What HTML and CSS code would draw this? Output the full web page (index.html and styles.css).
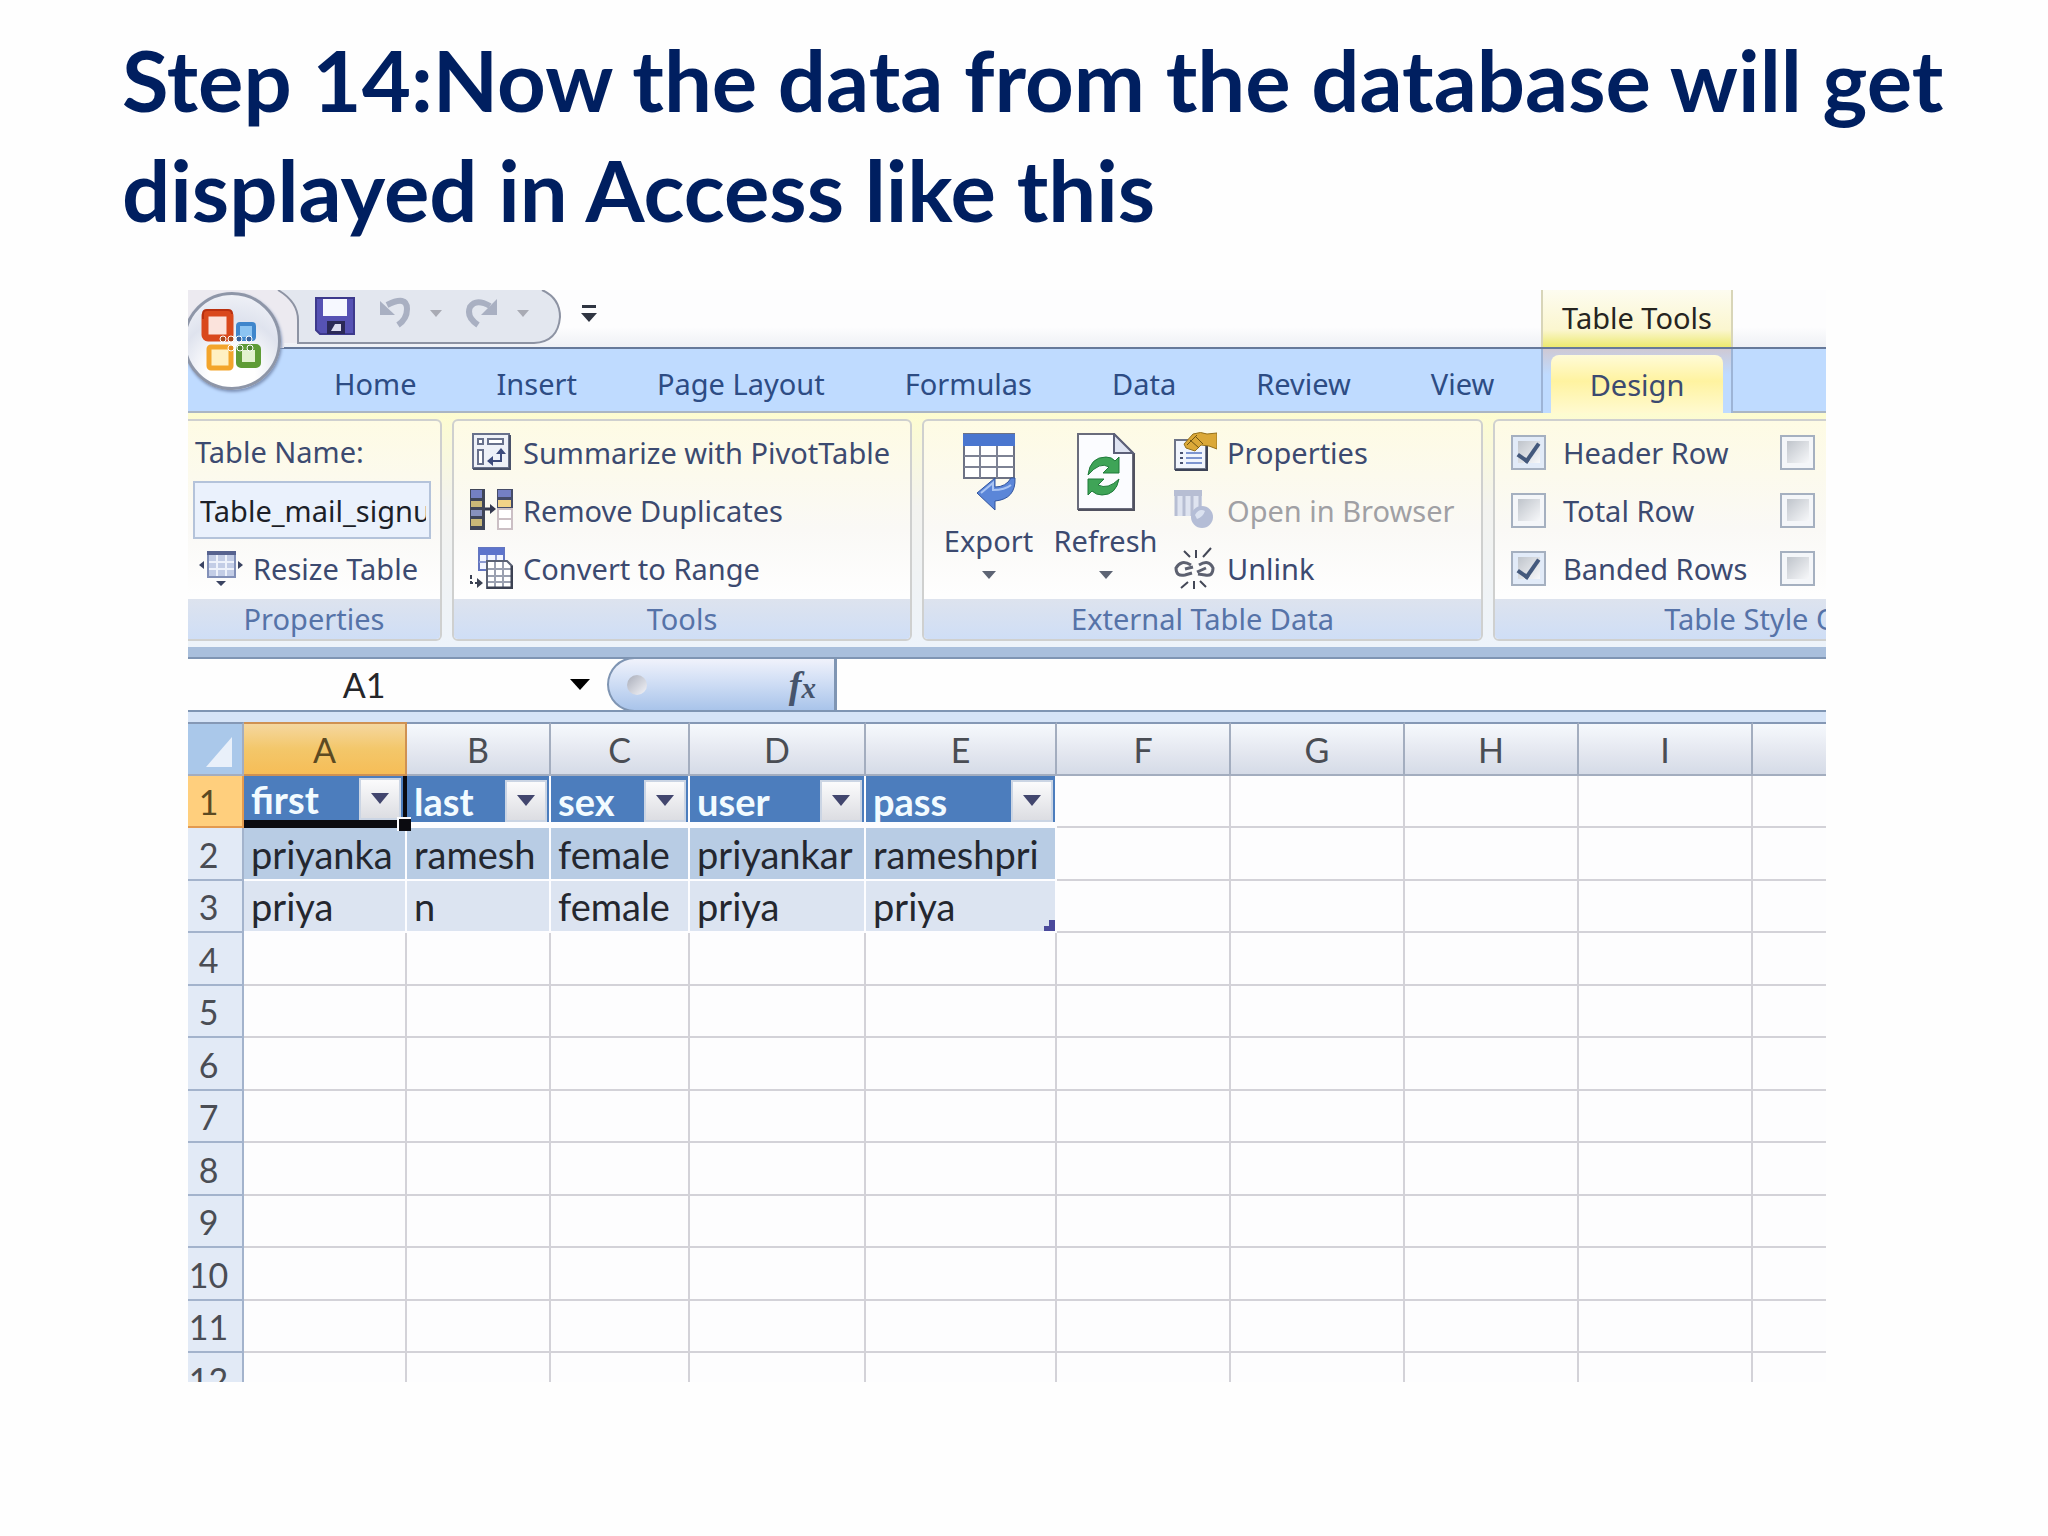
FILE: index.html
```
<!DOCTYPE html>
<html lang="en">
<head>
    <meta charset="UTF-8">
    <meta name="viewport" content="width=device-width, initial-scale=1.0">
    <title>Step 14</title>
    <link rel="stylesheet" href="styles.css">
</head>
<body>
    <h1>Step 14:Now the data from the database will get displayed in Access like this</h1>

    <div class="window">
        <button class="office-button" aria-label="Office Button">
            <svg viewBox="0 0 62 64" width="62" height="64">
                <rect x="4" y="4" width="25" height="25" rx="3" fill="#fbe3dc" stroke="#d9481c" stroke-width="7"/>
                <path d="M2 10V5q0-4 4-4h21q4 0 4 4" fill="none" stroke="#b9300f" stroke-width="2"/>
                <rect x="37" y="15" width="16" height="15" rx="2" fill="#8cc4f2" stroke="#3f86cc" stroke-width="4"/>
                <rect x="8" y="38" width="22" height="21" rx="2" fill="#fff0c2" stroke="#f3a52c" stroke-width="5"/>
                <rect x="38" y="38" width="19" height="18" rx="2" fill="#e3f2cf" stroke="#5f9c36" stroke-width="6"/>
                <g stroke="#fff" stroke-width="1">
                    <circle cx="22" cy="30" r="3" fill="#a5471c"/>
                    <circle cx="30" cy="30" r="3" fill="#a5471c"/>
                    <circle cx="38" cy="30" r="3" fill="#35619c"/>
                    <circle cx="48" cy="30" r="3" fill="#35619c"/>
                    <circle cx="30" cy="39" r="3" fill="#e08a1a"/>
                    <circle cx="39" cy="39" r="3" fill="#4f8330"/>
                    <circle cx="49" cy="39" r="3" fill="#4f8330"/>
                </g>
            </svg>
        </button>

        <div class="title-bar">
            <div class="quick-access">
                <svg class="quick-shape" viewBox="0 0 376 58" width="376" height="58">
                    <path d="M0 0H354Q372 8 372 27Q370 52 346 53H110V30Q110 12 92 0H0z" fill="#e3e7ef"/>
                    <path d="M0 0H90Q110 12 110 30V53H96V58H0z" fill="#eceaf0"/>
                    <path d="M354 0Q372 8 372 27Q370 52 346 53H110V30Q110 12 90 0" fill="none" stroke="#8d93a3" stroke-width="2"/>
                </svg>
                <button aria-label="Save">
                    <svg viewBox="0 0 40 38" width="40" height="38">
                        <path d="M1 1H39V37H5L1 33z" fill="#5652b4" stroke="#3d3a8c" stroke-width="2"/>
                        <rect x="8" y="2" width="24" height="17" fill="#f6f8ff"/>
                        <rect x="12" y="24" width="18" height="13" fill="#2b2957"/>
                        <path d="M16 34L20 27H26V34z" fill="#dcdcf0"/>
                    </svg>
                </button>
                <button aria-label="Undo" disabled>
                    <svg viewBox="0 0 36 32" width="36" height="32">
                        <path d="M10 8Q30-2 30 12Q30 22 21 28" fill="none" stroke="#a9b0c2" stroke-width="6"/>
                        <path d="M3 4V18H18z" fill="#a9b0c2"/>
                    </svg>
                    <svg class="arrow" viewBox="0 0 12 7" width="12" height="7"><path d="M0 0H12L6 7z" fill="#a9abb4"/></svg>
                </button>
                <button aria-label="Redo" disabled>
                    <svg viewBox="0 0 36 32" width="36" height="32">
                        <path d="M14 28Q2 20 6 10Q12 1 26 9" fill="none" stroke="#a9b0c2" stroke-width="6"/>
                        <path d="M33 2V18H17z" fill="#a9b0c2"/>
                    </svg>
                    <svg class="arrow" viewBox="0 0 12 7" width="12" height="7"><path d="M0 0H12L6 7z" fill="#a9abb4"/></svg>
                </button>
                <button class="customize" aria-label="Customize Quick Access Toolbar">
                    <svg viewBox="0 0 16 18" width="16" height="18"><path d="M1 0H15V3H1zM0 8H16L8 17z" fill="#2f3542"/></svg>
                </button>
            </div>
            <div class="context-title">Table Tools</div>
        </div>

        <nav class="tabs">
            <button>Home</button>
            <button>Insert</button>
            <button>Page Layout</button>
            <button>Formulas</button>
            <button>Data</button>
            <button>Review</button>
            <button>View</button>
            <div class="context-tabs">
                <button class="active">Design</button>
            </div>
        </nav>

        <div class="ribbon">
            <section class="group group-properties">
                <div class="group-body">
                    <label for="table-name">Table Name:</label>
                    <input type="text" id="table-name" value="Table_mail_signup">
                    <button class="command">
                        <svg viewBox="0 0 44 42" width="44" height="42">
                            <rect x="9" y="5" width="27" height="25" fill="#c3cde6" stroke="#8290b8" stroke-width="2"/>
                            <path d="M8 6H37" stroke="#56628f" stroke-width="4"/>
                            <path d="M18 8V29M27 8V29M10 15H35M10 22H35" stroke="#eef2fb" stroke-width="2"/>
                            <path d="M5 14V22L0 18zM39 14V22L44 18zM17 34H27L22 39z" fill="#3b4462"/>
                        </svg>
                        Resize Table
                    </button>
                </div>
                <div class="group-name">Properties</div>
            </section>

            <section class="group group-tools">
                <div class="group-body">
                    <button class="command">
                        <svg viewBox="0 0 44 42" width="44" height="42">
                            <rect x="4" y="3" width="36" height="34" fill="#eef1f8" stroke="#68718c" stroke-width="2"/>
                            <path d="M4 38H41V4" fill="none" stroke="#4a5269" stroke-width="2"/>
                            <path d="M9 8H14V13H9zM19 8H34V13H19zM9 19H14V33H9z" fill="#fff" stroke="#68718c" stroke-width="2"/>
                            <path d="M22 30H32V20" fill="none" stroke="#3c4a7c" stroke-width="2"/>
                            <path d="M24 25V35L18 30zM27 23H37L32 17z" fill="#3c4a7c"/>
                        </svg>
                        Summarize with PivotTable
                    </button>
                    <button class="command">
                        <svg viewBox="0 0 44 42" width="44" height="42">
                            <rect x="1" y="0" width="15" height="41" fill="#3f4558"/>
                            <path d="M2 1H13V9H2z" fill="#7480c4"/>
                            <path d="M2 12H13V18H2zM2 30H13V37H2z" fill="#c9b878"/>
                            <path d="M2 21H13V27H2z" fill="#8791bd"/>
                            <rect x="28" y="0" width="16" height="19" fill="#454c68"/>
                            <path d="M29 1H42V8H29z" fill="#7480c4"/>
                            <path d="M29 11H42V18H29z" fill="#f1d287"/>
                            <path d="M29 20H43V30H29zM29 30H43V40H29z" fill="#fff" stroke="#cbbfc4" stroke-width="2"/>
                            <path d="M16 20H24" stroke="#34384e" stroke-width="3"/>
                            <path d="M21 15L27 20L21 25z" fill="#34384e"/>
                        </svg>
                        Remove Duplicates
                    </button>
                    <button class="command">
                        <svg viewBox="0 0 44 42" width="44" height="42">
                            <rect x="10" y="1" width="25" height="22" fill="#f2f5ff" stroke="#6476c0" stroke-width="2"/>
                            <path d="M10 1H35V8H10z" fill="#5d74cc"/>
                            <path d="M18 8V22M27 8V22M10 15H35" stroke="#8c9ad2" stroke-width="2"/>
                            <path d="M18 14H38L43 19V41H18z" fill="#fff" stroke="#5b6274" stroke-width="2"/>
                            <path d="M19 22H42M19 29H42M19 35H42M26 15V40M34 15V40" stroke="#9aa0b0" stroke-width="2"/>
                            <path d="M43 19V41H18" fill="none" stroke="#3b4152" stroke-width="3"/>
                            <path d="M2 28V36H9" fill="none" stroke="#3b4152" stroke-width="2" stroke-dasharray="4 2"/>
                            <path d="M8 31L14 36L8 41z" fill="#3b4152"/>
                        </svg>
                        Convert to Range
                    </button>
                </div>
                <div class="group-name">Tools</div>
            </section>

            <section class="group group-external">
                <div class="group-body">
                    <button class="big-command">
                        <svg viewBox="0 0 54 78" width="54" height="78">
                            <rect x="2" y="1" width="50" height="44" fill="#fff" stroke="#6d7284" stroke-width="2"/>
                            <path d="M1 1H53V13H1z" fill="#4a76cf"/>
                            <path d="M18 13V45M35 13V45M2 23H52M2 34H52" stroke="#7d8294" stroke-width="2"/>
                            <path d="M15 60L33 45V54Q44 54 49 45H53Q54 66 33 68V77z" fill="#5b86d8" stroke="#31549e" stroke-width="1"/>
                            <path d="M19 60L31 50V57Q43 57 49 52" fill="none" stroke="#a9c4f3" stroke-width="2"/>
                        </svg>
                        Export
                        <svg class="arrow" viewBox="0 0 14 8" width="14" height="8"><path d="M0 0H14L7 8z" fill="#5d6474"/></svg>
                    </button>
                    <button class="big-command">
                        <svg viewBox="0 0 60 78" width="60" height="78">
                            <path d="M2 1H38L57 20V76H2z" fill="#fbfcff" stroke="#6a6c7c" stroke-width="2"/>
                            <path d="M58 20V77H2" fill="none" stroke="#50515f" stroke-width="2"/>
                            <path d="M38 1V20H57z" fill="#dfe4f2" stroke="#5c6078" stroke-width="2"/>
                            <path d="M12 42Q14 24 30 24Q36 24 39 28L43 24V40H27L33 34Q24 28 12 42z" fill="#3fa457" stroke="#1f7a3a" stroke-width="1"/>
                            <path d="M43 46Q40 62 26 62Q20 62 16 58L12 62V46H28L22 52Q32 57 43 46z" fill="#3fa457" stroke="#1f7a3a" stroke-width="1"/>
                        </svg>
                        Refresh
                        <svg class="arrow" viewBox="0 0 14 8" width="14" height="8"><path d="M0 0H14L7 8z" fill="#5d6474"/></svg>
                    </button>
                    <div class="command-list">
                        <button class="command">
                            <svg viewBox="0 0 44 42" width="44" height="42">
                                <rect x="2" y="9" width="31" height="29" fill="#f1f5fd" stroke="#6d7488" stroke-width="2"/>
                                <path d="M2 39H34V12" fill="none" stroke="#3d4356" stroke-width="2"/>
                                <path d="M7 22H10M7 27H10M7 32H10" stroke="#4a5270" stroke-width="2"/>
                                <path d="M13 22H29M13 27H29M13 32H29" stroke="#7d95d0" stroke-width="2"/>
                                <path d="M11 13L20 3Q28 0 34 3L44 2V18L36 15L28 14L22 20L13 17z" fill="#dba838" stroke="#94701c" stroke-width="1"/>
                                <path d="M17 9L26 17M22 5L30 13M14 14L24 4" stroke="#6e5312" stroke-width="1"/>
                            </svg>
                            Properties
                        </button>
                        <button class="command" disabled>
                            <svg viewBox="0 0 44 42" width="44" height="42">
                                <rect x="2" y="1" width="27" height="26" fill="#dfe4f0"/>
                                <path d="M1 1H29V7H1z" fill="#b7bed3"/>
                                <path d="M3 7V27M11 7V27M19 7V27M27 7V20" stroke="#b7bed3" stroke-width="3"/>
                                <circle cx="29" cy="28" r="11" fill="#b4bdd6"/>
                                <path d="M22 26Q26 19 32 22Q30 28 24 30z" fill="#dbe2f0"/>
                            </svg>
                            Open in Browser
                        </button>
                        <button class="command">
                            <svg viewBox="0 0 44 42" width="44" height="42">
                                <path d="M18 18Q8 12 3 21Q3 30 12 28L19 26M12 22L20 20M26 18Q36 12 40 21Q40 30 32 28L25 27M24 25L33 21" fill="none" stroke="#5d6170" stroke-width="3"/>
                                <path d="M11 4L17 10M23 3V11M38 1L30 10M8 41L15 35M21 34V42M27 34L33 40" stroke="#444857" stroke-width="2"/>
                            </svg>
                            Unlink
                        </button>
                    </div>
                </div>
                <div class="group-name">External Table Data</div>
            </section>

            <section class="group group-style">
                <div class="group-body">
                    <label><input type="checkbox" checked>Header Row</label>
                    <label><input type="checkbox" aria-label="First Column"></label>
                    <label><input type="checkbox">Total Row</label>
                    <label><input type="checkbox" aria-label="Last Column"></label>
                    <label><input type="checkbox" checked>Banded Rows</label>
                    <label><input type="checkbox" aria-label="Banded Columns"></label>
                </div>
                <div class="group-name">Table Style Options</div>
            </section>
        </div>

        <div class="formula-bar">
            <div class="name-box">
                <input type="text" value="A1" aria-label="Name Box">
                <button aria-label="Names">
                    <svg viewBox="0 0 20 11" width="20" height="11"><path d="M0 0H20L10 11z"/></svg>
                </button>
            </div>
            <div class="fx-bar">
                <span class="knob"></span>
                <button aria-label="Insert Function">f<small>x</small></button>
            </div>
            <input type="text" class="formula" aria-label="Formula">
        </div>

        <table class="sheet">
            <colgroup>
                <col class="col-num"><col class="col-a"><col class="col-b"><col class="col-c"><col class="col-d"><col class="col-e">
                <col class="col-plain"><col class="col-plain"><col class="col-plain"><col class="col-plain"><col>
            </colgroup>
            <thead>
                <tr>
                    <th class="corner"><svg viewBox="0 0 26 30" width="26" height="30"><path d="M26 0V30H0z" fill="#e9f0fa"/></svg></th>
                    <th class="selected">A</th><th>B</th><th>C</th><th>D</th><th>E</th>
                    <th>F</th><th>G</th><th>H</th><th>I</th><th></th>
                </tr>
            </thead>
            <tbody>
                <tr class="field-row">
                    <th class="selected">1</th>
                    <td class="active-cell"><div class="field">first <button aria-label="Filter first"><svg viewBox="0 0 18 11" width="18" height="11"><path d="M0 0H18L9 11z" fill="#42466e"/></svg></button></div><span class="fill-handle"></span></td>
                    <td><div class="field">last <button aria-label="Filter last"><svg viewBox="0 0 18 11" width="18" height="11"><path d="M0 0H18L9 11z" fill="#42466e"/></svg></button></div></td>
                    <td><div class="field">sex <button aria-label="Filter sex"><svg viewBox="0 0 18 11" width="18" height="11"><path d="M0 0H18L9 11z" fill="#42466e"/></svg></button></div></td>
                    <td><div class="field">user <button aria-label="Filter user"><svg viewBox="0 0 18 11" width="18" height="11"><path d="M0 0H18L9 11z" fill="#42466e"/></svg></button></div></td>
                    <td><div class="field">pass <button aria-label="Filter pass"><svg viewBox="0 0 18 11" width="18" height="11"><path d="M0 0H18L9 11z" fill="#42466e"/></svg></button></div></td>
                    <td class="empty"></td><td class="empty"></td><td class="empty"></td><td class="empty"></td><td class="empty"></td>
                </tr>
                <tr class="band-dark">
                    <th>2</th>
                    <td>priyanka</td><td>ramesh</td><td>female</td><td>priyankar</td><td>rameshpri</td>
                    <td class="empty"></td><td class="empty"></td><td class="empty"></td><td class="empty"></td><td class="empty"></td>
                </tr>
                <tr class="band-light">
                    <th>3</th>
                    <td>priya</td><td>n</td><td>female</td><td>priya</td>
                    <td class="table-end">priya<svg viewBox="0 0 11 11" width="11" height="11"><path d="M11 0V11H0V6H5V0z" fill="#4b4a9c"/></svg></td>
                    <td class="empty"></td><td class="empty"></td><td class="empty"></td><td class="empty"></td><td class="empty"></td>
                </tr>
                <tr><th>4</th><td></td><td></td><td></td><td></td><td></td><td></td><td></td><td></td><td></td><td></td></tr>
                <tr><th>5</th><td></td><td></td><td></td><td></td><td></td><td></td><td></td><td></td><td></td><td></td></tr>
                <tr><th>6</th><td></td><td></td><td></td><td></td><td></td><td></td><td></td><td></td><td></td><td></td></tr>
                <tr><th>7</th><td></td><td></td><td></td><td></td><td></td><td></td><td></td><td></td><td></td><td></td></tr>
                <tr><th>8</th><td></td><td></td><td></td><td></td><td></td><td></td><td></td><td></td><td></td><td></td></tr>
                <tr><th>9</th><td></td><td></td><td></td><td></td><td></td><td></td><td></td><td></td><td></td><td></td></tr>
                <tr><th>10</th><td></td><td></td><td></td><td></td><td></td><td></td><td></td><td></td><td></td><td></td></tr>
                <tr><th>11</th><td></td><td></td><td></td><td></td><td></td><td></td><td></td><td></td><td></td><td></td></tr>
                <tr><th>12</th><td></td><td></td><td></td><td></td><td></td><td></td><td></td><td></td><td></td><td></td></tr>
            </tbody>
        </table>
    </div>
</body>
</html>
```
FILE: styles.css
```
* {
    box-sizing: border-box;
}

body {
    margin: 0;
    padding: 24px 222px 0 188px;
    background: #fefefe;
    font-family: "Noto Sans", "Open Sans", sans-serif;
    font-size: 29px;
    color: #3c4a70;
}

h1 {
    margin: 0 -170px 46px -66px;
    font-family: Lato, sans-serif;
    font-size: 85px;
    font-weight: 700;
    line-height: 110px;
    color: #001f60;
}

button, input {
    font: inherit;
    color: inherit;
    margin: 0;
    padding: 0;
    border: none;
    background: none;
}

svg {
    display: block;
    flex: none;
}

.window {
    position: relative;
    aspect-ratio: 3 / 2;
    overflow: hidden;
    background: #fdfdfe;
}

/* title bar */
.office-button {
    position: absolute;
    top: 2px;
    left: -5px;
    z-index: 2;
    width: 98px;
    height: 98px;
    display: flex;
    align-items: center;
    justify-content: center;
    border: 3px solid #8e96a8;
    border-radius: 50%;
    background: radial-gradient(circle at 50% 85%, #ffffff 25%, #dfe3ee 60%, #f6f7fb 100%);
    box-shadow: 1px 2px 3px #7f93b8;
}

.title-bar {
    display: flex;
    justify-content: space-between;
    height: 59px;
    border-bottom: 2px solid #66799a;
    background: linear-gradient(#fdfdfe 65%, #eef0f5);
}

.quick-access {
    position: relative;
    display: flex;
    align-items: flex-start;
    gap: 22px;
    padding: 7px 0 0 127px;
}

.quick-access button {
    position: relative;
    display: flex;
    align-items: center;
    gap: 17px;
}

.quick-shape {
    position: absolute;
    top: 0;
    left: 0;
}

.quick-access button.customize {
    margin: 8px 0 0 30px;
}

.context-title {
    width: 192px;
    margin-right: 93px;
    border: solid #d8d5b8;
    border-width: 0 2px;
    background: linear-gradient(#fdfcf0, #fbf6cf 70%, #ecea70);
    color: #26241f;
    line-height: 56px;
    text-align: center;
}

/* tabs */
.tabs {
    display: flex;
    height: 64px;
    padding-left: 106px;
    border-bottom: 2px solid #aab6c4;
    background: #bfdbff;
    color: #2d4c84;
}

.tabs button {
    padding: 6px 40px 0;
}

.context-tabs {
    width: 192px;
    margin: 0 93px -2px auto;
    padding: 6px 8px 0;
    border: solid #9db4d6;
    border-width: 0 2px;
    background: linear-gradient(#cfc9d4, #bfdbff 40%);
}

.tabs .active {
    width: 100%;
    height: 58px;
    padding: 0;
    border-radius: 8px 8px 0 0;
    background: linear-gradient(#fffbd8, #fff3a0 45%, #fffad0);
    color: #3c4a70;
}

/* ribbon */
.ribbon {
    display: flex;
    gap: 10px;
    padding: 6px 0;
    overflow: hidden;
    background: linear-gradient(#fdfcd0, #f3f3ef 40%, #edf3fa);
}

.group {
    flex: none;
    display: flex;
    flex-direction: column;
    height: 222px;
    border: 2px solid #cfd0cf;
    border-radius: 6px;
    background: linear-gradient(#fefbe4, #faf9f6 50%, #fefefe 80%);
    overflow: hidden;
}

.group-properties {
    width: 254px;
    border-left: none;
    border-radius: 0 6px 6px 0;
}

.group-tools {
    width: 460px;
}

.group-external {
    width: 561px;
}

.group-style {
    width: 602px;
}

.group-body {
    height: 178px;
    padding: 2px 0 0 15px;
}

.group-name {
    flex: 1;
    background: linear-gradient(#dde3ee, #cfdef6);
    color: #5673a8;
    line-height: 40px;
    text-align: center;
}

.group-properties .group-body {
    padding: 2px 9px 0 5px;
}

.group-properties label {
    display: block;
    padding-left: 2px;
    line-height: 58px;
}

.group-properties input {
    display: block;
    width: 100%;
    height: 58px;
    padding: 0 3px 0 5px;
    border: 2px solid #b4c3da;
    background: #eaf1fc;
    color: #1c1f28;
}

.command {
    display: flex;
    align-items: center;
    gap: 10px;
    height: 58px;
    white-space: nowrap;
}

.group-properties .command {
    padding-left: 6px;
}

.command:disabled {
    color: #a0a0a4;
}

.group-external .group-body {
    display: flex;
    padding-left: 6px;
}

.big-command {
    display: flex;
    flex-direction: column;
    align-items: center;
    width: 117px;
    padding-top: 10px;
    line-height: 60px;
}

.command-list {
    padding-left: 9px;
}

.group-style .group-body {
    display: grid;
    grid-template-columns: 269px 1fr;
    grid-auto-rows: 58px;
    padding-left: 16px;
}

.group-style label {
    display: flex;
    align-items: center;
    gap: 17px;
    white-space: nowrap;
}

.group-style input {
    appearance: none;
    flex: none;
    width: 35px;
    height: 35px;
    display: grid;
    place-items: center;
    border: 2px solid #a5b0c0;
    background: linear-gradient(135deg, #bfc4cb, #f7f8fa) center / 22px 22px no-repeat #f4f6f9;
}

.group-style input:checked {
    background-color: #e2ebf8;
}

.group-style input:checked::before {
    content: "";
    width: 9px;
    height: 19px;
    margin-bottom: 4px;
    border: solid #44597c;
    border-width: 0 4px 4px 0;
    transform: rotate(35deg);
}

/* formula bar */
.formula-bar {
    display: flex;
    height: 75px;
    border-top: 10px solid #a9bfdc;
    border-bottom: 10px solid #d6e4f7;
    box-shadow: inset 0 2px #7f95b3, inset 0 -2px #7f95b3;
    background: #fefefe;
}

.name-box {
    display: flex;
    align-items: center;
    width: 419px;
    padding-right: 17px;
    font-family: Lato, sans-serif;
    font-size: 34px;
    color: #25262a;
}

.name-box input {
    flex: 1;
    min-width: 0;
    padding-right: 30px;
    text-align: center;
}

.fx-bar {
    display: flex;
    align-items: center;
    justify-content: space-between;
    width: 230px;
    padding: 0 18px;
    border: solid #7f95b3;
    border-width: 2px 3px 2px 2px;
    border-radius: 28px 0 0 28px;
    background: linear-gradient(#f0f2fb, #cddcf4 50%, #a9c4ea);
}

.knob {
    width: 20px;
    height: 20px;
    border-radius: 50%;
    background: linear-gradient(135deg, #a9adb9, #f4f5fa);
}

.fx-bar button {
    font-family: "Liberation Serif", serif;
    font-size: 38px;
    font-style: italic;
    font-weight: 700;
    color: #46546c;
}

.fx-bar small {
    font-size: 29px;
}

.formula {
    flex: 1;
    min-width: 0;
}

/* sheet */
.sheet {
    width: 100%;
    table-layout: fixed;
    border-collapse: separate;
    border-spacing: 0;
    font-family: Lato, sans-serif;
    font-size: 38px;
    line-height: 40px;
    color: #24272f;
}

.col-num { width: 56px; }
.col-a { width: 163px; }
.col-b { width: 144px; }
.col-c { width: 139px; }
.col-d { width: 176px; }
.col-e { width: 191px; }
.col-plain { width: 174px; }

.sheet tr {
    height: 52px;
}

.sheet tr:nth-child(even) {
    height: 53px;
}

.sheet th, .sheet td {
    padding: 0;
    border: solid #d3d2d8;
    border-width: 0 2px 2px 0;
    font-weight: 400;
    white-space: nowrap;
}

.sheet td {
    padding-left: 7px;
}

.sheet th {
    padding-top: 2px;
    font-size: 34px;
}

.sheet th:last-child, .sheet td:last-child {
    border-right: none;
}

.sheet thead th {
    height: 54px;
    border-color: #a3adbf;
    border-top: 2px solid #8598b5;
    background: linear-gradient(#f6f9fd, #e6e9f1 50%, #d5dbe7);
    color: #4a4d54;
}

.sheet tbody th {
    padding-right: 13px;
    border-color: #a3b3cc;
    background: #e2eaf6;
    color: #4a4d54;
}

.sheet thead .corner {
    padding: 6px 0 0 18px;
    background: #aac8ea;
}

.sheet thead .selected {
    border-color: #cf9152;
    background: linear-gradient(#f5d79f, #f3c76a 50%, #f6bd57);
    color: #5c4a22;
}

.sheet tbody .selected {
    border-color: #e39a4f;
    background: #ffcf7d;
    color: #5c4a22;
}

.sheet .field-row td {
    padding: 3px 2px 0 7px;
    border-color: #fdfdff;
    border-bottom-width: 6px;
    background: #4c7dbd;
    color: #f2fbff;
    font-weight: 700;
}

.field {
    display: flex;
    align-items: center;
    justify-content: space-between;
}

.field button {
    display: grid;
    place-items: center;
    width: 42px;
    height: 42px;
    border: 2px solid #cbd5e4;
    background: linear-gradient(#fbfbfc, #dcdde2);
}

.sheet .field-row .active-cell {
    position: relative;
    padding-top: 1px;
    border-right: 4px solid #0b0b10;
    border-bottom: 8px solid #0b0b10;
}

.fill-handle {
    position: absolute;
    right: -8px;
    bottom: -11px;
    width: 14px;
    height: 14px;
    border: solid #fdfdff;
    border-width: 2px 0 0 2px;
    background: #0b0b10;
}

.band-dark td {
    border-color: #fdfdff;
    background: #b8cce4;
}

.band-light td {
    border-color: #fdfdff;
    background: #dce4f1;
}

.sheet tr .empty {
    border-color: #d3d2d8;
    border-bottom-width: 2px;
    background: none;
}

.sheet .table-end {
    position: relative;
}

.table-end svg {
    position: absolute;
    right: 0;
    bottom: 0;
}
```
